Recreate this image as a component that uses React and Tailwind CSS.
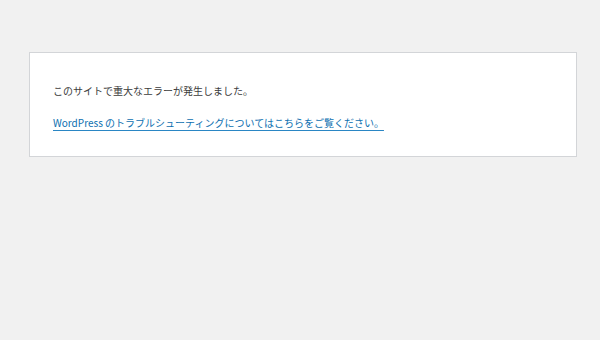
export default function App() {
  return (
    <div className="w-[600px] h-[340px] bg-[#f1f1f1] pt-[52px] pl-[29px] overflow-hidden">
      <div className="w-[548px] h-[105px] bg-white border border-[#d3d5d8] pl-[23px] pt-[30px] text-[10px] leading-[16px] text-[#3c3c3c] [font-family:'Noto_Sans_CJK_JP','Noto_Sans',sans-serif]">
        <p className="m-0">このサイトで重大なエラーが発生しました。</p>
        <p className="mt-[16px]">
          <a href="#" className="text-[#0d6fb0] underline decoration-[#2a86c4] underline-offset-[3px]">
            WordPress のトラブルシューティングについてはこちらをご覧ください。
          </a>
        </p>
      </div>
    </div>
  );
}
